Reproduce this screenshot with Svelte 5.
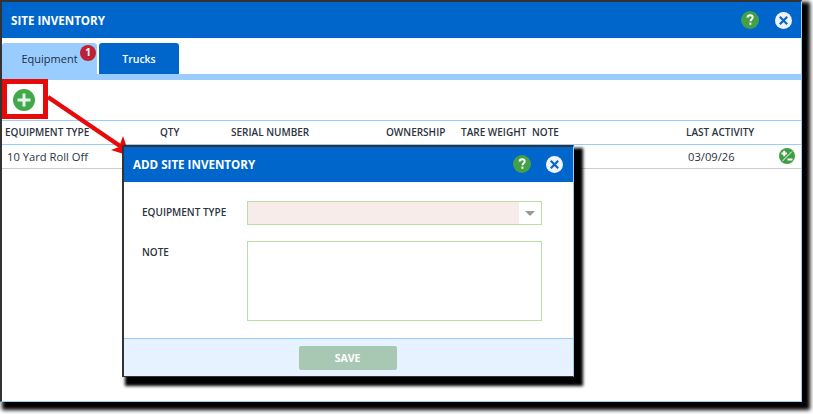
<script>
  const columns = [
    { label: 'EQUIPMENT TYPE', value: '10 Yard Roll Off' },
    { label: 'QTY', value: '' },
    { label: 'SERIAL NUMBER', value: '' },
    { label: 'OWNERSHIP', value: '' },
    { label: 'TARE WEIGHT', value: '' },
    { label: 'NOTE', value: '' },
    { label: 'LAST ACTIVITY', value: '03/09/26' }
  ];
</script>

{#snippet helpIcon()}
  <svg class="icon" width="18" height="18" viewBox="0 0 18 18">
    <circle cx="9" cy="9" r="9" fill="#43a047" />
    <path d="M6.4 6.6c.2-1.600 1.300-2.400 2.700-2.400 1.500 0 2.600.9 2.600 2.200 0 1.900-2.200 1.900-2.200 3.800" fill="none" stroke="#fff" stroke-width="1.900" />
    <rect x="8.400" y="11.600" width="2" height="2.100" fill="#fff" />
  </svg>
{/snippet}

{#snippet closeIcon()}
  <svg class="icon" width="17" height="17" viewBox="0 0 17 17">
    <circle cx="8.500" cy="8.500" r="8.500" fill="#eef4fc" />
    <path d="M4.800 4.800l7.400 7.400M12.200 4.800l-7.400 7.400" stroke="#0a66c6" stroke-width="2.200" />
  </svg>
{/snippet}

<div class="page">
  <div class="window">
    <header class="titlebar">
      <h1>SITE INVENTORY</h1>
      <div class="actions">
        {@render helpIcon()}
        {@render closeIcon()}
      </div>
    </header>

    <nav class="tabs">
      <button class="tab active">
        Equipment
        <span class="badge">1</span>
      </button>
      <button class="tab">Trucks</button>
    </nav>

    <div class="toolbar">
      <svg width="22" height="22" viewBox="0 0 22 22">
        <circle cx="11" cy="11" r="11" fill="#43a84c" />
        <path d="M11 4.500v13M4.500 11h13" stroke="#e8f5e9" stroke-width="3" />
      </svg>
    </div>

    <div class="grid head">
      {#each columns as col}
        <div>{col.label}</div>
      {/each}
    </div>
    <div class="grid row">
      {#each columns as col}
        <div>{col.value}</div>
      {/each}
      <svg class="row-icon" width="16" height="16" viewBox="0 0 16 16">
        <circle cx="8" cy="8" r="8" fill="#3f9e45" />
        <path d="M2.500 5.500h5.500M5.200 2.800v5.400M8.500 11.500h5" stroke="#fff" stroke-width="2" />
        <path d="M13 3.500l-9.500 9.500" stroke="#fff" stroke-width="1" />
      </svg>
    </div>
  </div>

  <div class="callout"></div>
  <svg class="arrow" width="100" height="80" viewBox="0 0 100 80">
    <path d="M0 7L72 56" stroke="#e60a0a" stroke-width="4.500" />
    <path d="M82 66L63 60L71 57L75 46z" fill="#e60a0a" />
  </svg>

  <section class="modal">
    <header class="titlebar modal-title">
      <h2>ADD SITE INVENTORY</h2>
      <div class="actions">
        {@render helpIcon()}
        {@render closeIcon()}
      </div>
    </header>
    <div class="form">
      <div class="field">
        <span class="field-label">EQUIPMENT TYPE</span>
        <div class="select">
          <div class="select-value"></div>
          <div class="caret"></div>
        </div>
      </div>
      <div class="field">
        <span class="field-label note">NOTE</span>
        <div class="textarea"></div>
      </div>
    </div>
    <footer class="modal-foot">
      <button class="save">SAVE</button>
    </footer>
  </section>
</div>

<style>
  :global(body) {
    margin: 0;
    background: #fff;
    font-family: "Open Sans", "Noto Sans", sans-serif;
  }

  .page {
    position: relative;
    width: 813px;
    height: 414px;
    overflow: hidden;
    background: #fff;
  }

  .window {
    box-sizing: border-box;
    width: 802px;
    height: 402px;
    border-top: 2px solid #333;
    border-left: 2px solid #333;
    border-right: 1px solid #99ccff;
    border-bottom: 1px solid #99ccff;
    background: #fff;
    box-shadow: 5px 5px 4px 3px #000;
  }

  .titlebar {
    display: flex;
    align-items: center;
    justify-content: space-between;
    height: 36px;
    padding: 0 9px;
    background: #0066cc;
    color: #fff;
  }

  h1, h2 {
    margin: 0;
    font-size: 11.6px;
    font-weight: 700;
  }

  .actions {
    display: flex;
    align-items: center;
    gap: 16px;
  }

  .icon {
    display: block;
  }

  .tabs {
    display: flex;
    gap: 2px;
    height: 31px;
    margin-top: 5px;
    border-bottom: 6px solid #99ccff;
  }

  .tab {
    position: relative;
    height: 31px;
    width: 80px;
    padding: 0;
    border: none;
    border-radius: 3px 3px 0 0;
    background: #0066cc;
    color: #fff;
    font: 600 10.5px "Open Sans", sans-serif;
  }

  .tab.active {
    width: 95px;
    background: #99ccff;
    color: #22303f;
    font-weight: 400;
    font-size: 11px;
  }

  .badge {
    position: absolute;
    top: 2px;
    left: 78px;
    width: 16px;
    height: 16px;
    border-radius: 50%;
    background: #c02033;
    color: #fff;
    font-size: 10px;
    font-weight: 700;
    line-height: 15px;
    text-align: center;
  }

  .toolbar {
    display: flex;
    align-items: center;
    height: 40px;
    padding-left: 11px;
    box-sizing: border-box;
  }

  .grid {
    position: relative;
    display: grid;
    grid-template-columns: 155px 71px 155px 75px 71px 154px 1fr;
    padding-left: 3px;
    color: #2b3440;
  }

  .head {
    height: 25px;
    padding-bottom: 1px;
    align-items: center;
    border-top: 1px solid #99ccff;
    border-bottom: 1px solid #99ccff;
    box-sizing: border-box;
    font-size: 10px;
    font-weight: 600;
  }

  .row {
    height: 24px;
    align-items: center;
    border-bottom: 1px solid #ccc;
    box-sizing: border-box;
    font-size: 11.200px;
  }

  .row > div {
    padding-left: 2px;
  }

  .row-icon {
    position: absolute;
    top: 3px;
    left: 777px;
  }

  .callout {
    position: absolute;
    left: 2px;
    top: 79px;
    width: 46px;
    height: 40px;
    box-sizing: border-box;
    border: 5px solid #e60a0a;
  }

  .arrow {
    position: absolute;
    left: 48px;
    top: 90px;
  }

  .modal {
    position: absolute;
    left: 122px;
    top: 145px;
    box-sizing: border-box;
    width: 452px;
    height: 232px;
    display: flex;
    flex-direction: column;
    border-top: 2px solid #333;
    border-left: 2px solid #333;
    border-right: 1px solid #99ccff;
    border-bottom: 1px solid #333;
    background: #fff;
    box-shadow: 6px 6px 3px 3px #000;
  }

  .modal-title {
    height: 35px;
    flex: none;
    box-sizing: border-box;
    padding: 0 10px 1px 9px;
  }

  .modal-title .actions {
    gap: 15px;
  }

  .form {
    flex: 1;
    padding: 19px 31px 0 18px;
    display: flex;
    flex-direction: column;
    gap: 16px;
  }

  .field {
    display: flex;
    align-items: flex-start;
  }

  .field-label {
    width: 105px;
    flex: none;
    line-height: 22px;
    font-size: 10px;
    font-weight: 600;
    color: #2b3440;
  }

  .select {
    flex: 1;
    display: flex;
    height: 24px;
    box-sizing: border-box;
    border: 1px solid #b9dfa5;
  }

  .select-value {
    flex: 1;
    background: #f7ece9;
  }

  .caret {
    position: relative;
    width: 22px;
  }

  .caret::after {
    content: "";
    position: absolute;
    left: 6px;
    top: 9px;
    border-left: 5px solid transparent;
    border-right: 5px solid transparent;
    border-top: 5px solid #999;
  }

  .textarea {
    flex: 1;
    height: 80px;
    box-sizing: border-box;
    border: 1px solid #b9dfa5;
  }

  .modal-foot {
    flex: none;
    display: flex;
    justify-content: center;
    align-items: center;
    box-sizing: border-box;
    height: 38px;
    border-top: 1px solid #99ccff;
    background: #e6f2ff;
    padding-right: 2px;
  }

  .save {
    width: 98px;
    height: 24px;
    border: none;
    border-radius: 2px;
    background: #a8c8b4;
    color: #fff;
    font: 700 10.500px "Open Sans", sans-serif;
  }
</style>
